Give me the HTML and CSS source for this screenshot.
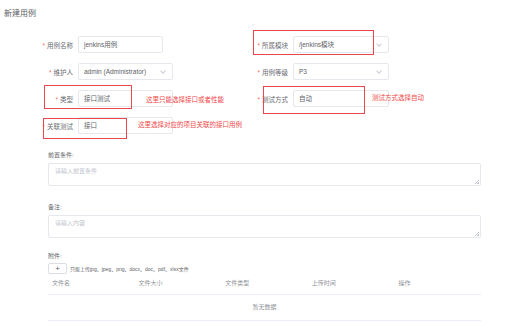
FILE: index.html
```html
<!DOCTYPE html>
<html>
<head>
	<meta charset="utf-8">
	<title>新建用例</title>
	<link rel="stylesheet" href="styles.css">
</head>
<body>
<div id="page">
	<h1 class="title">新建用例</h1>

	<div class="form-grid">
		<div class="item">
			<label class="label"><span class="star">*</span>用例名称</label>
			<div class="input short">jenkins用例</div>
		</div>
		<div class="item">
			<label class="label"><span class="star">*</span>所属模块</label>
			<div class="input wide">/jenkins模块<span class="arrow"></span></div>
		</div>
		<div class="item">
			<label class="label"><span class="star">*</span>维护人</label>
			<div class="input">admin (Administrator)<span class="arrow"></span></div>
		</div>
		<div class="item">
			<label class="label"><span class="star">*</span>用例等级</label>
			<div class="input wide">P3<span class="arrow"></span></div>
		</div>
		<div class="item">
			<label class="label"><span class="star">*</span>类型</label>
			<div class="input">接口测试</div>
		</div>
		<div class="item">
			<label class="label"><span class="star">*</span>测试方式</label>
			<div class="input wide">自动</div>
		</div>
		<div class="item">
			<label class="label"><span class="star">*</span>关联测试</label>
			<div class="input">接口</div>
		</div>
		<div class="item"></div>
	</div>

	<div class="block">
		<div class="block-label">前置条件:</div>
		<div class="textarea">请输入前置条件<span class="grip"></span></div>

		<div class="block-label gap">备注:</div>
		<div class="textarea">请输入内容<span class="grip"></span></div>

		<div class="block-label gap2">附件:</div>
		<div class="upload">
			<button class="plus">+</button>
			<span class="tip">只能上传jpg、jpeg、png、docx、doc、pdf、xlsx文件</span>
		</div>

		<div class="table">
			<div class="thead">
				<div>文件名</div>
				<div>文件大小</div>
				<div>文件类型</div>
				<div>上传时间</div>
				<div>操作</div>
			</div>
			<div class="empty">暂无数据</div>
		</div>
	</div>

	<!-- red notes drawn over the form -->
	<div class="mark" style="left:253px;top:30px;width:121px;height:25px"></div>
	<div class="mark" style="left:44px;top:85px;width:88px;height:24px"></div>
	<div class="mark" style="left:263px;top:86px;width:102px;height:28px"></div>
	<div class="mark" style="left:43px;top:118px;width:84px;height:21px"></div>
	<div class="note" style="left:146px;top:95px">这里只能选择接口或者性能</div>
	<div class="note" style="left:372px;top:93px">测试方式选择自动</div>
	<div class="note" style="left:138px;top:120px">这里选择对应的项目关联的接口用例</div>
</div>
</body>
</html>
```

FILE: styles.css
```css
body {
	margin: 0;
	background: #fff;
	font-family: "Liberation Sans", "Noto Sans CJK SC", sans-serif;
	color: #606266;
}

#page {
	position: relative;
	width: 508px;
	height: 325px;
	overflow: hidden;
}

.title {
	margin: 0;
	padding: 8px 0 0 4px;
	height: 30px;
	box-sizing: border-box;
	font-size: 8px;
	line-height: 11px;
	font-weight: normal;
	color: #5a5c61;
}

.form-grid {
	display: grid;
	grid-template-columns: 215px 215px;
	row-gap: 10px;
	padding: 6px 0 0 33px;
}

.item {
	display: flex;
	align-items: center;
	height: 17px;
}

.label {
	width: 45px;
	padding-right: 5px;
	box-sizing: border-box;
	text-align: right;
	font-size: 6.5px;
	color: #6a6c71;
	white-space: nowrap;
}

.star {
	color: #f56c6c;
	margin-right: 2px;
}

.input {
	position: relative;
	width: 95px;
	height: 17px;
	box-sizing: border-box;
	border: 1px solid #e6e8ee;
	border-radius: 2px;
	padding-left: 5px;
	font-size: 6.5px;
	line-height: 15px;
	color: #606266;
	white-space: nowrap;
}

.input.short {
	width: 85px;
}

.input.wide {
	width: 96px;
}

.arrow {
	position: absolute;
	right: 7px;
	top: 5px;
	width: 3px;
	height: 3px;
	border-right: 1px solid #c8ccd4;
	border-bottom: 1px solid #c8ccd4;
	transform: rotate(45deg);
}

.block {
	padding: 16px 0 0 48px;
	width: 433px;
}

.block-label {
	font-size: 6px;
	line-height: 10px;
	color: #606266;
}

.block-label.gap {
	margin-top: 16px;
}

.block-label.gap2 {
	margin-top: 13px;
}

.textarea {
	position: relative;
	margin-top: 3px;
	height: 23px;
	box-sizing: border-box;
	border: 1px solid #e6e8ee;
	border-radius: 2px;
	padding: 2px 6px;
	font-size: 6px;
	line-height: 10px;
	color: #c0c4cc;
}

.grip {
	position: absolute;
	right: 1px;
	bottom: 1px;
	width: 4px;
	height: 4px;
	background: linear-gradient(135deg, transparent 45%, #c0c4cc 45%, #c0c4cc 55%, transparent 55%, transparent 75%, #c0c4cc 75%);
}

.upload {
	display: flex;
	align-items: center;
	margin-top: 2px;
	height: 11px;
}

.plus {
	width: 19px;
	height: 11px;
	padding: 0;
	border: 1px solid #dcdfe6;
	border-radius: 2px;
	background: #fff;
	color: #606266;
	font-size: 8px;
	line-height: 8px;
	font-family: "Liberation Sans", sans-serif;
}

.tip {
	margin-left: 3px;
	font-size: 5px;
	color: #606266;
}

.thead {
	display: grid;
	grid-template-columns: repeat(5, 1fr);
	height: 21px;
	box-sizing: border-box;
	padding-bottom: 3px;
	align-items: center;
	border-bottom: 1px solid #ebeef5;
	font-size: 6px;
	color: #909399;
}

.thead div {
	padding-left: 4px;
}

.empty {
	height: 25px;
	line-height: 25px;
	text-align: center;
	border-bottom: 1px solid #ebeef5;
	font-size: 6px;
	color: #909399;
}

.mark {
	position: absolute;
	box-sizing: border-box;
	border: 1.5px solid #e8474e;
}

.note {
	position: absolute;
	font-family: "Noto Sans CJK SC", sans-serif;
	font-size: 6.5px;
	line-height: 9px;
	color: #f04848;
	white-space: nowrap;
}
```
